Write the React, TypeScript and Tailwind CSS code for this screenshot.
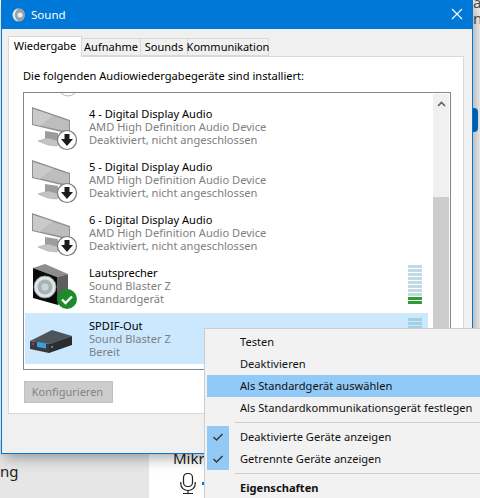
import React from "react";

const font = "font-['Noto_Sans','Open_Sans',sans-serif]";

function Monitor() {
  return (
    <svg width="50" height="47" viewBox="0 0 50 47" className="block">
      <polygon points="17,26 30,28 30,37 17,35" fill="#9c9c9c" />
      <polygon points="10,36 20,33 31,36 29,41 20,40" fill="#c4c4c4" stroke="#a6a6a6" strokeWidth="0.6" />
      <polygon points="4,2 42,15 42,29 4,20" fill="#8f8f8f" />
      <polygon points="5,4 41,16 41,27 5,19" fill="#bdbdbd" />
      <polygon points="5,4 25,10.6 12,20.7 5,19" fill="#cacaca" />
      <circle cx="39" cy="35" r="9.5" fill="#ffffff" stroke="#7a7a7a" strokeWidth="1.2" />
      <polygon points="36.5,29 41.5,29 41.5,34 45,34 39,41 33,34 36.5,34" fill="#1c1c1c" />
    </svg>
  );
}

function Speaker() {
  return (
    <svg width="50" height="47" viewBox="0 0 50 47" className="block">
      <polygon points="5,4 17,0 40,10 29,13" fill="#8d8d8d" />
      <polygon points="29,13 40,10 40,31 30,41" fill="#5e5e5e" />
      <polygon points="5,4 29,13 30,41 5,34" fill="#0b0b0b" />
      <circle cx="17" cy="23" r="11" fill="#dfe4e5" stroke="#8f9597" strokeWidth="0.8" />
      <circle cx="17" cy="23" r="7.5" fill="#a7b3b6" />
      <circle cx="17" cy="23" r="3.5" fill="#cdd5d7" />
      <circle cx="39" cy="35" r="10" fill="#1f8a2d" />
      <path d="M34 35.5l3.5 3.5 6.5-6.5" fill="none" stroke="#ffffff" strokeWidth="2.4" />
    </svg>
  );
}

function Receiver() {
  return (
    <svg width="50" height="47" viewBox="0 0 50 47" className="block">
      <polygon points="2,24 24,13 44,19 21,27" fill="#4e555a" />
      <polygon points="2,24 21,27 21,36 2,32" fill="#373b3f" />
      <polygon points="21,27 44,19 44,28 21,36" fill="#2b2e31" />
      <polygon points="9,25 18,26.5 18,31.5 9,30" fill="#3f9de0" />
      <circle cx="5" cy="27" r="1.2" fill="#a04040" />
      <circle cx="24" cy="30" r="1.1" fill="#8a8f92" />
    </svg>
  );
}

function Meter({ lit, tint }: { lit: number; tint: string }) {
  const bars = Array.from({ length: 10 }, (_, i) => i);
  return (
    <div className="flex flex-col gap-px w-[14px]">
      {bars.map((i) => (
        <div
          key={i}
          className="h-[3px] w-full"
          style={{ backgroundColor: i >= 10 - lit ? "#329a32" : tint }}
        />
      ))}
    </div>
  );
}

function Row({
  icon,
  name,
  l2,
  l3,
  selected,
  meter,
}: {
  icon: React.ReactNode;
  name: string;
  l2: string;
  l3: string;
  selected?: boolean;
  meter?: React.ReactNode;
}) {
  return (
    <div className={`relative flex h-[51px] mb-[2px] shrink-0 w-[403px] ${selected ? "bg-[#cce8ff]" : ""}`}>
      <div className="w-[64px] pl-[3px] pt-[4px] shrink-0">{icon}</div>
      <div className="flex flex-col pt-[6px] text-[11.1px] leading-[13px] whitespace-nowrap">
        <span className="text-black h-[13px]">{name}</span>
        <span className="text-[#808080] h-[13px]">{l2}</span>
        <span className="text-[#808080] h-[13px]">{l3}</span>
      </div>
      {meter ? <div className="absolute left-[383px] top-[5px]">{meter}</div> : null}
    </div>
  );
}

function MenuItem({ children, hl, checked, bold }: { children: React.ReactNode; hl?: boolean; checked?: boolean; bold?: boolean }) {
  return (
    <div className={`relative h-[22px] flex items-center whitespace-nowrap ${hl ? "bg-[#91c9f7]" : ""} ${bold ? "font-bold" : ""}`}>
      <div className={`w-[22px] h-full flex items-center justify-center shrink-0 ${checked ? "bg-[#91c9f7]" : ""}`}>
        {checked ? (
          <svg width="10" height="8" viewBox="0 0 10 8">
            <path d="M0.5 4l3 3L9.5 1" fill="none" stroke="#333333" strokeWidth="1.3" />
          </svg>
        ) : null}
      </div>
      <span className="ml-[11px] text-[11.1px] text-[#111]">{children}</span>
    </div>
  );
}

function Tab({ children, active, w }: { children: React.ReactNode; active?: boolean; w: string }) {
  return (
    <div
      className={`flex justify-center items-center border border-[#d9d9d9] -mr-px ${w} ${
        active ? "h-[21px] bg-white border-b-0 relative z-10 -mb-px" : "h-[18px] bg-[#f0f0f0]"
      }`}
    >
      {children}
    </div>
  );
}

export default function App() {
  return (
    <div className={`relative w-[480px] h-[498px] overflow-hidden bg-white ${font}`}>
      {/* page behind */}
      <div className="absolute left-0 top-[440px] w-[149px] h-[58px] bg-[#e6e6e6]" />
      <span className="absolute left-0 top-[462px] text-[15px] leading-[18px] text-[#222]">ng</span>
      <span className="absolute left-[173px] top-[449px] text-[15px] leading-[18px] text-[#222]">Mikrofon</span>
      <svg className="absolute left-[180px] top-[473px]" width="16" height="21" viewBox="0 0 16 21">
        <rect x="3.5" y="0.5" width="9" height="13" rx="4" fill="none" stroke="#222" strokeWidth="1.2" />
        <path d="M0.8 9v2a7.2 6.5 0 0 0 14.4 0V9M8 17.5v3M3 20.5h10" fill="none" stroke="#222" strokeWidth="1.2" />
      </svg>
      <div className="absolute left-[202px] top-[482px] w-[2px] h-[3px] bg-[#0078d7]" />
      <div className="absolute left-[473px] top-[108px] w-[5px] h-[24px] bg-[#0078d7] rounded-r-[4px]" />
      <span className="absolute left-[473px] top-[-3px] text-[15px] leading-[11px] text-[#555]">al</span>
      <span className="absolute left-[473px] top-[12px] text-[15px] leading-[12px] text-[#555]">n</span>

      {/* dialog window */}
      <div className="absolute left-[1px] top-0 w-[472px] h-[454px] flex flex-col bg-[#f0f0f0] border border-[#0078d7] border-t-0 shadow-[3px_3px_14px_rgba(0,0,0,0.38)]">
        <div className="h-[29px] shrink-0 bg-[#0078d7] flex items-center text-white -mx-px">
          <svg className="ml-[11px] shrink-0" width="14" height="16" viewBox="0 0 14 16">
            <ellipse cx="6" cy="8" rx="5.5" ry="6.5" fill="#e0e4e6" />
            <ellipse cx="8" cy="8" rx="5" ry="6.5" fill="#9aa3a8" />
            <circle cx="8" cy="8" r="2.5" fill="#e8eced" />
          </svg>
          <span className="ml-[5px] text-[11.5px] leading-[18px]">Sound</span>
          <svg className="ml-auto mr-[10px] -mt-[2px]" width="12" height="12" viewBox="0 0 12 12">
            <path d="M1 1l10 10M11 1L1 11" stroke="#ffffff" strokeWidth="1.1" fill="none" />
          </svg>
        </div>
        <div className="flex-1 flex flex-col pl-[6px] pt-[7px]">
          <div className="flex items-end text-[11px] text-black relative">
            <Tab active w="w-[74px]"><span className="-mt-[2px]">Wiedergabe</span></Tab>
            <Tab w="w-[60px]">Aufnahme</Tab>
            <Tab w="w-[48px]">Sounds</Tab>
            <Tab w="w-[82px]">Kommunikation</Tab>
          </div>
          <div className="w-[456px] h-[358px] bg-white border border-[#d9d9d9] pl-[14px] pt-[11px] flex flex-col">
            <div className="text-[11.1px] leading-[16px] text-black whitespace-nowrap">
              Die folgenden Audiowiedergabegeräte sind installiert:
            </div>
            <div className="mt-[8px] w-[428px] h-[278px] border border-[#82878c] flex overflow-hidden relative">
              <div className="w-[408px] h-full pl-px overflow-hidden flex flex-col">
                <div className="h-[8px] shrink-0 relative">
                  <svg className="absolute left-[35px] top-0" width="16" height="5" viewBox="0 0 16 5">
                    <path d="M1 0Q8 6 15 0" fill="none" stroke="#b8b8b8" strokeWidth="1" />
                  </svg>
                </div>
                <Row icon={<Monitor />} name="4 - Digital Display Audio" l2="AMD High Definition Audio Device" l3="Deaktiviert, nicht angeschlossen" />
                <Row icon={<Monitor />} name="5 - Digital Display Audio" l2="AMD High Definition Audio Device" l3="Deaktiviert, nicht angeschlossen" />
                <Row icon={<Monitor />} name="6 - Digital Display Audio" l2="AMD High Definition Audio Device" l3="Deaktiviert, nicht angeschlossen" />
                <Row icon={<Speaker />} name="Lautsprecher" l2="Sound Blaster Z" l3="Standardgerät" meter={<Meter lit={2} tint="#c0dbe4" />} />
                <Row selected icon={<Receiver />} name="SPDIF-Out" l2="Sound Blaster Z" l3="Bereit" meter={<Meter lit={0} tint="#a4d0e3" />} />
              </div>
              <div className="w-[16px] ml-auto mr-[1px] my-[1px] bg-[#f0f0f0] flex flex-col items-center">
                <svg className="mt-[7px]" width="9" height="6" viewBox="0 0 9 6">
                  <path d="M1 5l3.5-3.5L8 5" fill="none" stroke="#606060" strokeWidth="1.6" />
                </svg>
                <div className="mt-[90px] w-full flex-1 bg-[#cdcdcd]" />
              </div>
            </div>
            <div className="mt-[11px] ml-px w-[89px] h-[22px] bg-[#cccccc] border border-[#bfbfbf] text-[11px] text-[#838383] flex items-center justify-center pr-[2px]">
              Konfigurieren
            </div>
          </div>
        </div>
      </div>

      {/* context menu */}
      <div className="absolute left-[204px] top-[328px] w-[290px] h-[180px] bg-[#f2f2f2] border border-[#cccccc] pl-[2px] pt-[2px] flex flex-col">
        <MenuItem>Testen</MenuItem>
        <MenuItem>Deaktivieren</MenuItem>
        <MenuItem hl>Als Standardgerät auswählen</MenuItem>
        <MenuItem>Als Standardkommunikationsgerät festlegen</MenuItem>
        <div className="h-[7px] flex items-center pl-[28px]">
          <div className="h-px w-full bg-[#d0d0d0]" />
        </div>
        <MenuItem checked>Deaktivierte Geräte anzeigen</MenuItem>
        <MenuItem checked>Getrennte Geräte anzeigen</MenuItem>
        <div className="h-[7px] flex items-center pl-[28px]">
          <div className="h-px w-full bg-[#d0d0d0]" />
        </div>
        <MenuItem bold>Eigenschaften</MenuItem>
      </div>
    </div>
  );
}
